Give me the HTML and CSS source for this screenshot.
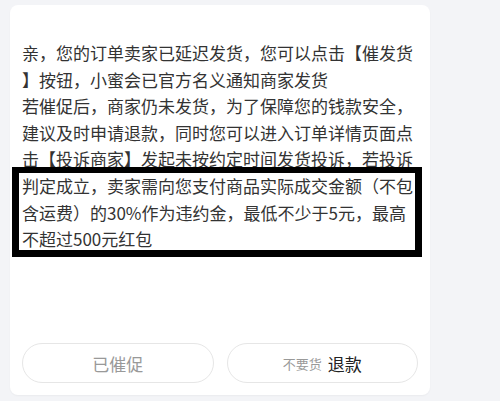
FILE: index.html
```html
<!DOCTYPE html>
<html lang="zh-CN">
<head>
    <meta charset="UTF-8">
    <meta name="viewport" content="width=device-width, initial-scale=1.0">
    <title>催发货</title>
    <link rel="stylesheet" href="styles.css">
</head>
<body>
    <div class="card">
        <div class="message">
            <p>亲，您的订单卖家已延迟发货，您可以点击【催发货】按钮，小蜜会已官方名义通知商家发货</p>
            <p>若催促后，商家仍未发货，为了保障您的钱款安全，建议及时申请退款，同时您可以进入订单详情页面点击【投诉商家】发起未按约定时间发货投诉，若投诉判定成立，卖家需向您支付商品实际成交金额（不包含运费）的30%作为违约金，最低不少于5元，最高不超过500元红包</p>
        </div>
        <div class="actions">
            <button class="btn btn-done">已催促</button>
            <button class="btn"><span class="btn-hint">不要货</span><span class="btn-main">退款</span></button>
        </div>
    </div>
    <div class="highlight"></div>
</body>
</html>
```

FILE: styles.css
```css
* {
    box-sizing: border-box;
    margin: 0;
    padding: 0;
}

html, body {
    height: 100%;
}

body {
    position: relative;
    background: #f3f4f7;
    font-family: "Noto Sans CJK SC", "Noto Sans", sans-serif;
    color: #333333;
    padding: 5px 0 0 10px;
}

.card {
    width: 420px;
    height: 390px;
    background: #ffffff;
    border-radius: 8px;
    box-shadow: 0 1px 2px rgba(0, 0, 0, 0.04);
    padding: 35px 12px 12px 12px;
    display: flex;
    flex-direction: column;
}

.message {
    font-size: 17px;
    line-height: 26.6px;
    width: 396px;
    line-break: anywhere;
}

.actions {
    margin-top: auto;
    display: flex;
    gap: 13px;
}

.btn {
    flex: 1;
    height: 40px;
    border: 1px solid #e6e6e6;
    border-radius: 20px;
    background: #ffffff;
    font-family: inherit;
    display: flex;
    align-items: center;
    justify-content: center;
    gap: 6px;
}

.btn-done {
    font-size: 17px;
    color: #999999;
}

.btn-hint {
    font-size: 13px;
    color: #999999;
}

.btn-main {
    font-size: 17px;
    color: #222222;
}

/* annotation frame drawn over the screenshot */
.highlight {
    position: absolute;
    left: 12px;
    top: 167px;
    width: 410px;
    height: 90px;
    border: 7px solid #000000;
    border-top-width: 6px;
}
```
